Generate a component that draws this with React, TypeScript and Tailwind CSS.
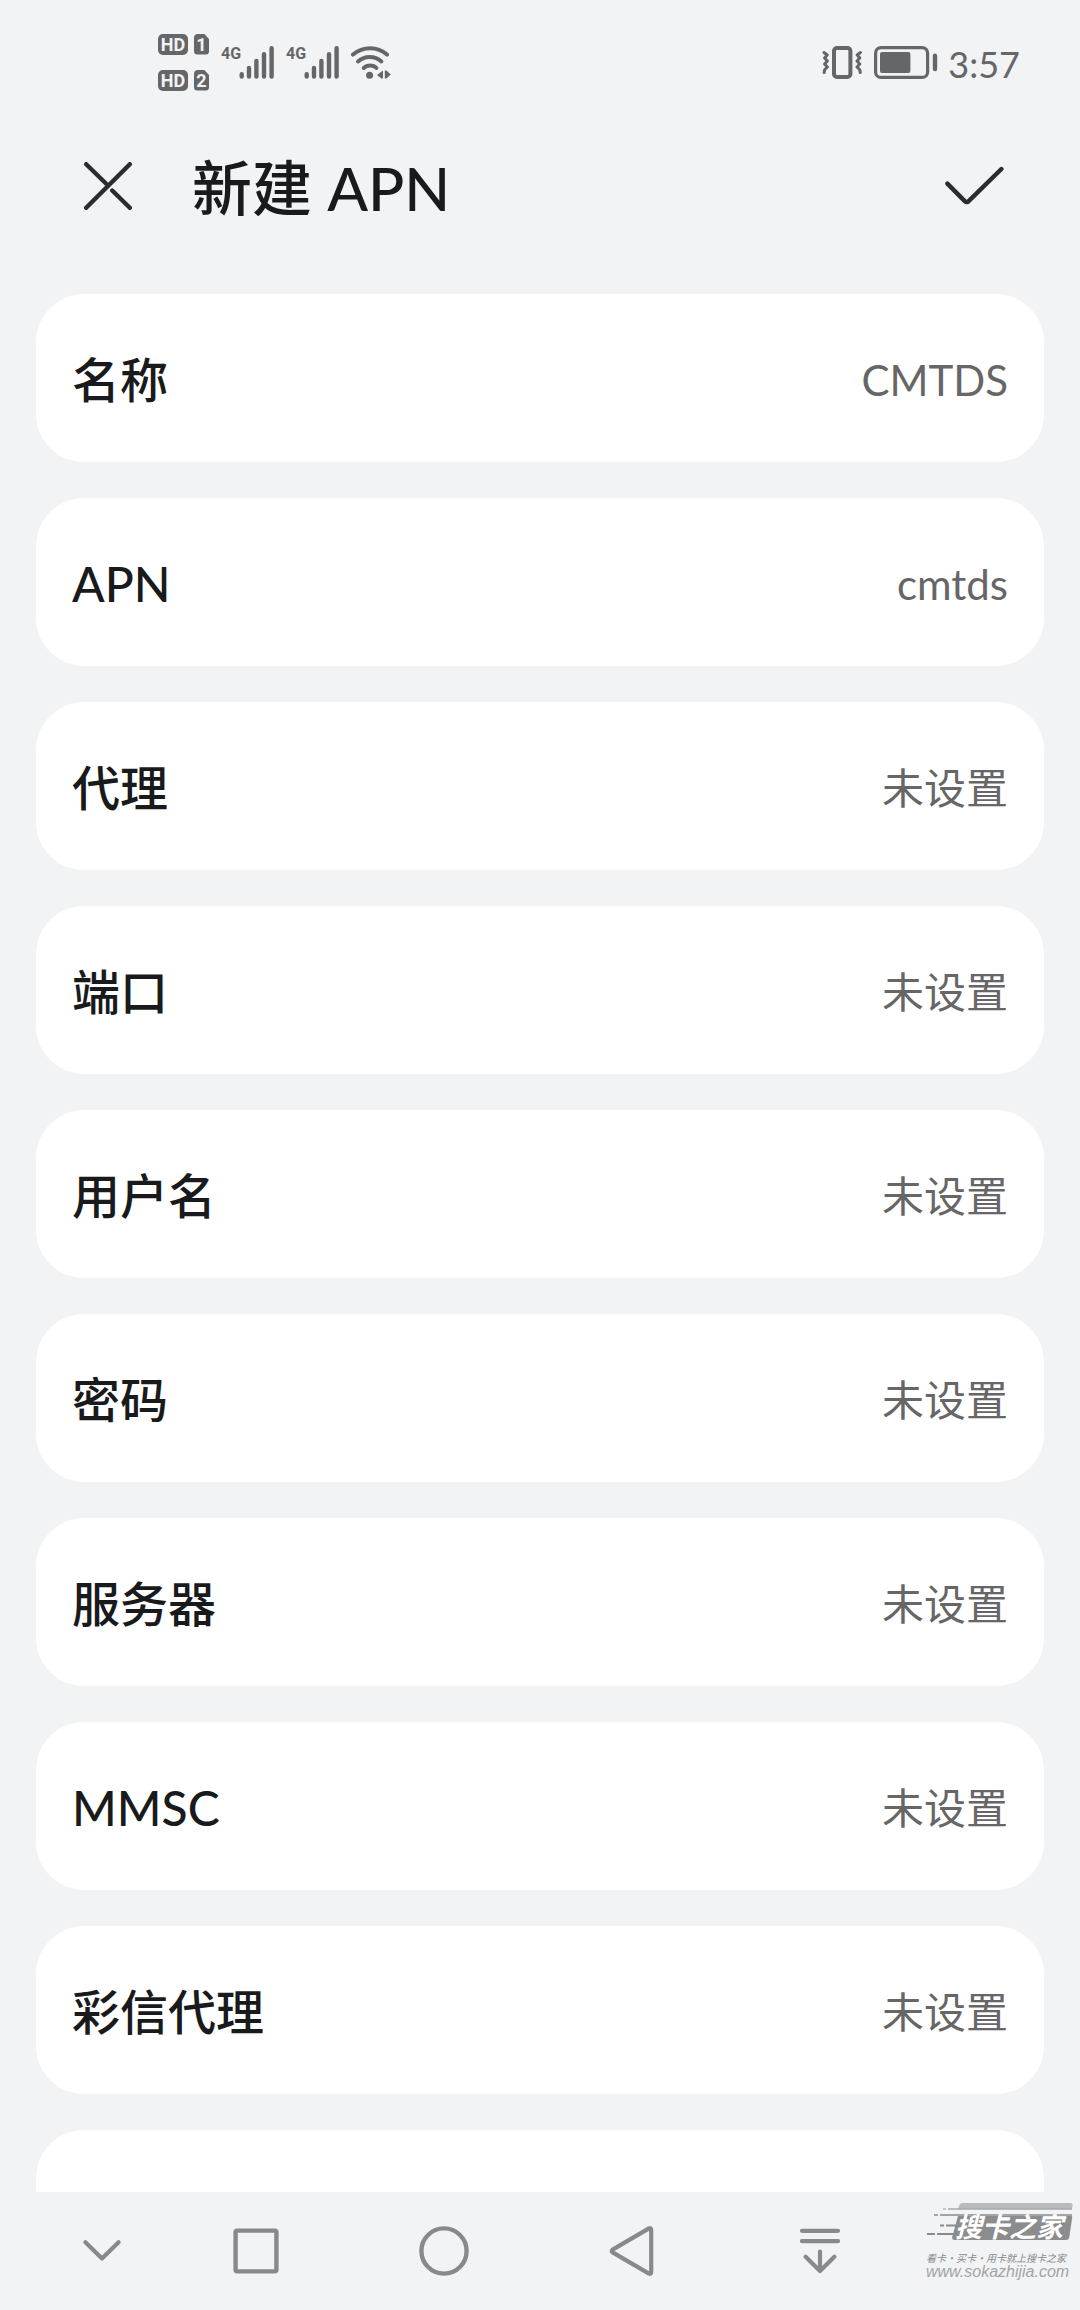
interface ApnField {
  label: string;
  value: string;
}

const fields: ApnField[] = [
  { label: "名称", value: "CMTDS" },
  { label: "APN", value: "cmtds" },
  { label: "代理", value: "未设置" },
  { label: "端口", value: "未设置" },
  { label: "用户名", value: "未设置" },
  { label: "密码", value: "未设置" },
  { label: "服务器", value: "未设置" },
  { label: "MMSC", value: "未设置" },
  { label: "彩信代理", value: "未设置" },
];

function HdBadge({ sim }: { sim: number }) {
  return (
    <div className="flex gap-[6px] font-['Roboto',sans-serif] text-lg font-bold leading-[21px] text-[#f2f3f5]">
      <span className="flex h-[21px] w-[30px] items-center justify-center rounded-[5px] bg-[#656668]">HD</span>
      <span className="flex h-[21px] w-[15px] items-center justify-center rounded-[4px] bg-[#656668] [clip-path:polygon(0_0,66%_0,100%_26%,100%_100%,0_100%)]">
        {sim}
      </span>
    </div>
  );
}

function Signal() {
  return (
    <div className="flex h-[33px] w-[53px] items-start">
      <span className="w-[18px] font-['Roboto',sans-serif] text-base font-bold leading-4">4G</span>
      <svg className="h-[33px] w-[35px] shrink-0" viewBox="0 0 35 33" stroke="currentColor" strokeWidth="4.4" strokeLinecap="round">
        <path d="M2.7 28.2v2.4M10 22v8.6M17.4 15v15.6M25 8.2v22.4M32.6 2.2v28.4" />
      </svg>
    </div>
  );
}

function WifiIcon() {
  return (
    <svg className="h-[33px] w-[40px]" viewBox="0 0 40 33" fill="none" stroke="currentColor" strokeWidth="4" strokeLinecap="round">
      <path d="M2 8.6C12 .1 26.4 .1 36 8.6" />
      <path d="M7 15.4c6.8-6 16.800-6 23.400 0" />
      <path d="M12.8 22c3.4-3.4 9.4-3.4 12.6 0" />
      <circle cx="18.6" cy="29.3" r="3.5" fill="currentColor" stroke="none" />
      <path d="M32 24.6v8h-1.6L26 29zM33.8 24.6h1.600l4.400 3.800-4.400 4.200h-1.600z" fill="currentColor" stroke="none" />
    </svg>
  );
}

function VibrateIcon() {
  return (
    <svg className="h-[33px] w-[40px]" viewBox="0 0 40 33" fill="none" stroke="currentColor" strokeLinecap="round" strokeLinejoin="round">
      <rect x="12" y="2" width="16.4" height="29" rx="3" strokeWidth="4" />
      <path d="M2 6.500l3.200 2.500-2.600 3 2.800 3-2.800 3 2.800 3-2.800 2.800L2.200 26.500" strokeWidth="3" />
      <path d="M38.400 6.500l-3.200 2.500 2.600 3-2.800 3 2.800 3-2.800 3 2.800 2.800L38.200 26.500" strokeWidth="3" />
    </svg>
  );
}

function BatteryIcon() {
  return (
    <svg className="h-[33px] w-[64px]" viewBox="0 0 64 33" fill="none" stroke="currentColor">
      <rect x="1.6" y="1.6" width="52" height="29.8" rx="5.5" strokeWidth="3.2" />
      <rect x="6" y="6" width="30.4" height="21" rx="2" fill="currentColor" stroke="none" />
      <rect x="58.8" y="7.6" width="4.4" height="17.6" rx="2.2" fill="currentColor" stroke="none" />
    </svg>
  );
}

function StatusBar() {
  return (
    <div className="flex h-[124px] shrink-0 items-center justify-between pl-[158px] pr-[60px] text-[#656668]">
      <div className="flex items-center gap-3">
        <div className="flex flex-col gap-[15px]">
          <HdBadge sim={1} />
          <HdBadge sim={2} />
        </div>
        <Signal />
        <Signal />
        <WifiIcon />
      </div>
      <div className="flex items-center">
        <VibrateIcon />
        <div className="ml-3">
          <BatteryIcon />
        </div>
        <span className="ml-[10px] pt-1 text-4xl">3:57</span>
      </div>
    </div>
  );
}

function Header() {
  return (
    <header className="flex h-[124px] shrink-0 items-center pl-[84px] pr-[76px] text-[#191a1c]">
      <button type="button" aria-label="取消">
        <svg className="block size-12" viewBox="0 0 48 48" fill="none" stroke="#2b2c2e" strokeWidth="4.4" strokeLinecap="round">
          <path d="M2.2 2.2L24 23.5M45.8 2.2L2.2 45.8" />
          <path d="M28.2 28.5L45.8 45.8" />
        </svg>
      </button>
      <h1 className="ml-[60px] flex-1 pt-1 text-6xl font-medium">新建 APN</h1>
      <button type="button" aria-label="确定">
        <svg className="block h-[40px] w-[60px]" viewBox="0 0 60 40" fill="none" stroke="#2b2c2e" strokeWidth="4.4" strokeLinecap="round" strokeLinejoin="round">
          <path d="M3.4 17.6L21 35.4q1.6 1.4 3.4 0L57.4 3" />
        </svg>
      </button>
    </header>
  );
}

function Watermark() {
  return (
    <div className="flex flex-col items-start text-[#a3a4a6]">
      <svg className="h-[40px] w-[150px] overflow-visible" viewBox="0 0 150 40" fill="none">
        <path d="M36 1h108q3 0 2.6 2.6L146 7H32l1-3q1-3 3-3z" fill="#b9babb" />
        <path d="M22 7h124" stroke="#a8a9ab" strokeWidth="1.4" />
        <path d="M17 7h3" stroke="#b9babb" strokeWidth="1.6" />
        <path d="M14 13h132M8 13h4" stroke="#a3a4a6" strokeWidth="1.8" />
        <path d="M32 14h113q1.4 0 1.2 1.4l-3 20q-.6 2.6-3 2.6H29q-3.4 0-2.8-3z" fill="#8b8c8e" />
        <path d="M14 23.5h4M20 23.5h12M1 32h8M11 32h18" stroke="#8b8c8e" strokeWidth="1.8" />
        <text x="29" y="35" fill="#fff" fontSize="27" fontWeight="700" fontStyle="italic" fontFamily="Noto Sans CJK SC, sans-serif">
          搜卡之家
        </text>
      </svg>
      <span className="mt-2 whitespace-nowrap font-['Noto_Sans_CJK_SC',sans-serif] text-[10px] italic leading-4 text-[#88898a]">
        看卡·买卡·用卡就上搜卡之家
      </span>
      <span className="whitespace-nowrap font-['Liberation_Sans',sans-serif] text-base italic leading-3">www.sokazhijia.com</span>
    </div>
  );
}

function NavigationBar() {
  return (
    <nav className="flex h-[118px] shrink-0 items-center pl-[42px] text-[#88898a]">
      <button type="button" aria-label="收起" className="flex w-[120px] justify-center">
        <svg className="size-14" viewBox="0 0 56 56" fill="none" stroke="currentColor" strokeWidth="4.2" strokeLinecap="round" strokeLinejoin="round">
          <path d="M11.4 19.2L28 35.6 44.6 19.2" />
        </svg>
      </button>
      <button type="button" aria-label="最近任务" className="flex flex-1 justify-center">
        <svg className="size-14" viewBox="0 0 56 56" fill="none" stroke="currentColor" strokeWidth="4.4">
          <rect x="7.6" y="7.6" width="40.8" height="40.8" rx="1.6" />
        </svg>
      </button>
      <button type="button" aria-label="主屏幕" className="flex flex-1 justify-center">
        <svg className="size-14" viewBox="0 0 56 56" fill="none" stroke="currentColor" strokeWidth="4.4">
          <circle cx="28" cy="28" r="22.6" />
        </svg>
      </button>
      <button type="button" aria-label="返回" className="flex flex-1 justify-center">
        <svg className="size-14" viewBox="0 0 56 56" fill="none" stroke="currentColor" strokeWidth="4.2" strokeLinejoin="round">
          <path d="M8.6 26.6L45 5.4q2.2-.8 2.2 1.6v42q0 2.4-2.2 1.6L8.6 29.4q-1.8-1.4 0-2.8z" />
        </svg>
      </button>
      <button type="button" aria-label="通知面板" className="flex flex-1 justify-center">
        <svg className="size-14" viewBox="0 0 56 56" fill="none" stroke="currentColor" strokeWidth="4.2" strokeLinecap="round" strokeLinejoin="round">
          <path d="M10 7.8h36M10 18.2h36M28 28.6V48M13.6 33.8L28 48l14.4-14.2" />
        </svg>
      </button>
      <div className="w-[166px] self-start pl-3 pt-[10px]">
        <Watermark />
      </div>
    </nav>
  );
}

export default function App() {
  return (
    <div className="flex h-screen flex-col overflow-hidden bg-[#f2f3f5] font-['Lato','Noto_Sans_CJK_SC',sans-serif]">
      <StatusBar />
      <Header />
      <main className="min-h-0 flex-1 overflow-hidden px-9 pt-[46px]">
        <ul className="flex flex-col gap-9">
          {fields.map(field => (
            <li key={field.label}>
              <button type="button" className="flex h-[168px] w-full items-center justify-between rounded-[48px] bg-white px-9 pt-1 text-left">
                <span className="text-5xl font-medium text-[#191a1c]">{field.label}</span>
                <span className="text-[42px] text-[#666]">{field.value}</span>
              </button>
            </li>
          ))}
          <li className="h-[168px] rounded-[48px] bg-white" />
        </ul>
      </main>
      <NavigationBar />
    </div>
  );
}
